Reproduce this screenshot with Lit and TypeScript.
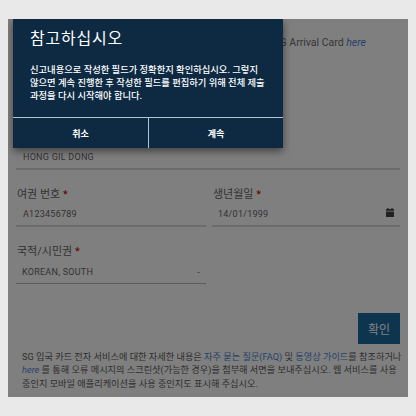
import { LitElement, html, css } from "lit";
import { customElement } from "lit/decorators.js";

@customElement("app-root")
export class AppRoot extends LitElement {
  static styles = css`
    :host {
      display: block;
      width: 416px;
      height: 416px;
      box-sizing: border-box;
      padding: 19px 8px;
      background: #e9e9e9;
      font-family: Roboto, "Noto Sans CJK KR", sans-serif;
      overflow: hidden;
    }
    .screen {
      position: relative;
      height: 378px;
      background: #fff;
      overflow: hidden;
    }
    .content {
      display: flex;
      flex-direction: column;
      padding: 16px 8px 0;
      color: #666;
    }
    .intro {
      margin: 0;
      height: 113px;
      font-size: 10.5px;
      line-height: 16px;
      text-align: right;
      padding-right: 34px;
      color: #6e6e6e;
    }
    a {
      color: #4a86d0;
      text-decoration: none;
    }
    .intro a {
      font-style: italic;
    }
    .row {
      display: grid;
      grid-template-columns: 190px 188px;
      gap: 6px;
    }
    .field {
      display: flex;
      flex-direction: column;
      min-width: 0;
    }
    .label {
      font-size: 11px;
      line-height: 16px;
      height: 16px;
      margin: 0 0 2px 1px;
      color: #666;
    }
    .req {
      color: #c00;
    }
    .value {
      display: flex;
      align-items: center;
      justify-content: space-between;
      height: 22px;
      box-sizing: border-box;
      padding: 0 6px 3px 7px;
      border-bottom: 2px solid #d8d8d8;
      font-size: 9px;
      letter-spacing: 0.25px;
      color: #666;
    }
    .value.select {
      padding-left: 6px;
      padding-right: 6px;
      padding-bottom: 2px;
      border-bottom: 1px solid #b8b8b8;
    }
    .date {
      padding-left: 6px;
    }
    .name {
      margin-bottom: 17px;
    }
    .second {
      margin-top: 17px;
    }
    .actions {
      display: flex;
      justify-content: flex-end;
      margin-top: 29px;
    }
    .confirm {
      width: 42px;
      height: 31px;
      border: 0;
      padding: 0;
      background: #1a6a9e;
      color: #fff;
      font: inherit;
      font-size: 12px;
    }
    .note {
      margin: 6px 0 0 6px;
      font-size: 9.2px;
      line-height: 13.4px;
      color: #5c5c5c;
      white-space: nowrap;
    }
    .overlay {
      position: absolute;
      inset: 0;
      background: rgba(0, 0, 0, 0.5);
    }
    .dialog {
      position: absolute;
      left: 5px;
      top: 0;
      width: 270px;
      height: 129px;
      display: flex;
      flex-direction: column;
      background: #0d2a42;
      color: #fff;
      box-shadow: 0 3px 8px rgba(0, 0, 0, 0.5);
    }
    .body {
      flex: 1;
      padding: 9px 17px 0;
    }
    .title {
      margin: 0;
      font-size: 16px;
      font-weight: 400;
      line-height: 22px;
      letter-spacing: 0.8px;
    }
    .msg {
      margin: 13px 0 0;
      font-size: 9.3px;
      font-weight: 500;
      line-height: 13.2px;
      white-space: nowrap;
    }
    .btns {
      display: grid;
      grid-template-columns: 135px 1fr;
      height: 30px;
      border-top: 1px solid #b5c4d2;
    }
    .btns button {
      border: 0;
      padding: 0;
      background: none;
      color: #fff;
      font: inherit;
      font-size: 9px;
      font-weight: 700;
    }
    .btns button + button {
      border-left: 1px solid #b5c4d2;
    }
    svg {
      display: block;
      width: 8px;
      height: 9px;
      fill: #444;
      margin-bottom: 2px;
    }
  `;

  render() {
    return html`
      <div class="screen">
        <div class="content">
          <p class="intro">SG Arrival Card <a href="#">here</a></p>
          <div class="field name">
            <div class="value">HONG GIL DONG</div>
          </div>
          <div class="row">
            <div class="field">
              <div class="label">여권 번호 <span class="req">*</span></div>
              <div class="value">A123456789</div>
            </div>
            <div class="field">
              <div class="label">생년월일 <span class="req">*</span></div>
              <div class="value date">
                14/01/1999
                <svg viewBox="0 0 9 10"><path d="M1.5 0h1.4v1.2h3.2V0h1.4v1.2H9V3H0V1.2h1.5zM0 3.8h9V10H0z" /></svg>
              </div>
            </div>
          </div>
          <div class="row second">
            <div class="field">
              <div class="label">국적/시민권 <span class="req">*</span></div>
              <div class="value select">KOREAN, SOUTH <span>-</span></div>
            </div>
          </div>
          <div class="actions"><button class="confirm">확인</button></div>
          <p class="note">
            SG 입국 카드 전자 서비스에 대한 자세한 내용은 <a href="#">자주 묻는 질문(FAQ)</a> 및 <a href="#">동영상 가이드</a>를 참조하거나<br />
            <a href="#"><i>here</i></a> 를 통해 오류 메시지의 스크린샷(가능한 경우)을 첨부해 서면을 보내주십시오. 웹 서비스를 사용<br />
            중인지 모바일 애플리케이션을 사용 중인지도 표시해 주십시오.
          </p>
        </div>
        <div class="overlay"></div>
        <div class="dialog">
          <div class="body">
            <h2 class="title">참고하십시오</h2>
            <p class="msg">
              신고내용으로 작성한 필드가 정확한지 확인하십시오. 그렇지<br />
              않으면 계속 진행한 후 작성한 필드를 편집하기 위해 전체 제출<br />
              과정을 다시 시작해야 합니다.
            </p>
          </div>
          <div class="btns">
            <button>취소</button>
            <button>계속</button>
          </div>
        </div>
      </div>
    `;
  }
}
